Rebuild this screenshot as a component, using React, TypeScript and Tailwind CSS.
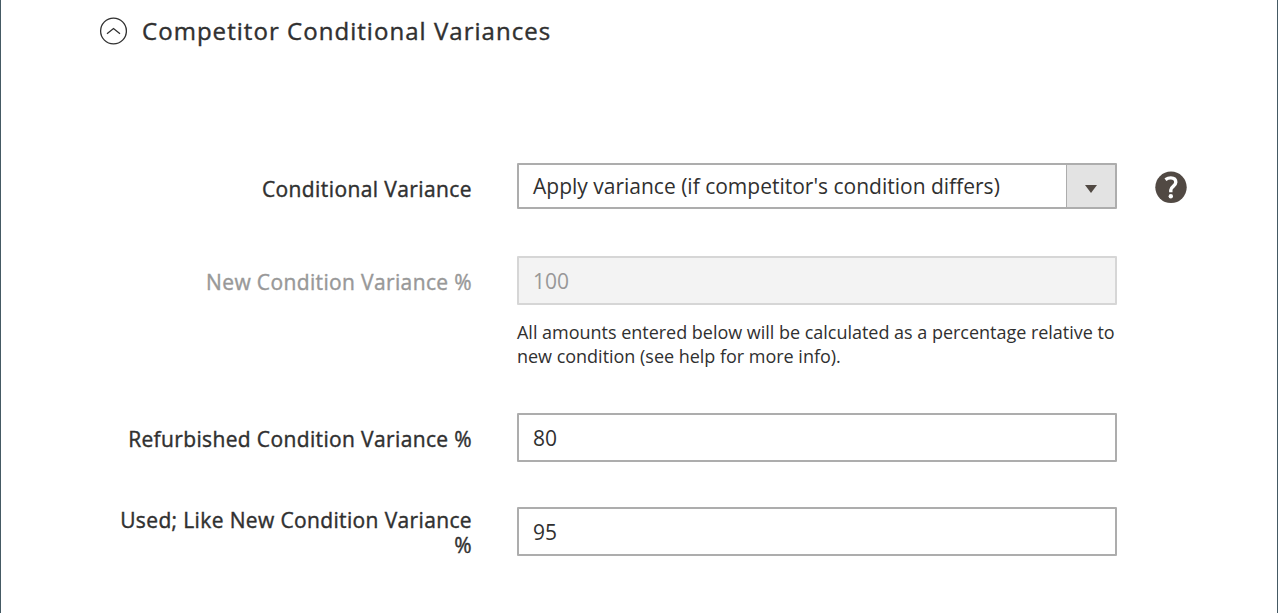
import type { ReactNode } from "react";

function Row({ label, labelClass, className, children }: { label: string; labelClass: string; className: string; children: ReactNode }) {
  return (
    <div className={`flex items-start ${className}`}>
      <label className={`w-[373px] shrink-0 text-right text-[21px] leading-[25px] font-medium tracking-[0.36px] [-webkit-text-stroke:0.4px] ${labelClass}`}>{label}</label>
      <div className="ml-[45px] w-[600px] shrink-0">{children}</div>
    </div>
  );
}

export default function App() {
  return (
    <main className="h-[613px] w-[1278px] overflow-hidden border-x border-[#455a64] bg-white pl-[99px] font-['Open_Sans',sans-serif] text-[#303030]">
      <header className="-ml-px flex h-[61px] items-center gap-[15px] pt-px">
        <svg width="28" height="28" viewBox="0 0 28 28" fill="none" stroke="#303030" strokeWidth="1.3">
          <circle cx="14.5" cy="14" r="12.9" />
          <path d="M8 16.8L14.5 11.5L21 16.8" />
        </svg>
        <h1 className="text-[24px] font-medium tracking-[1.04px] [-webkit-text-stroke:0.4px]">Competitor Conditional Variances</h1>
      </header>
      <div className="-ml-[1px] pt-[102px]">
        <div className="flex h-[93px] items-start">
          <label className="w-[373px] shrink-0 pt-[14px] text-right text-[21px] leading-[25px] font-medium tracking-[0.4px] [-webkit-text-stroke:0.4px]">Conditional Variance</label>
          <button className="ml-[45px] flex h-[46px] w-[600px] shrink-0 rounded-[1px] border-2 border-[#adadad] text-left text-[21px]">
            <span className="flex h-full grow items-center pt-[2px] pl-[14px]">Apply variance (if competitor's condition differs)</span>
            <span className="flex h-full w-[49px] items-center justify-center border-l border-[#adadad] bg-[#e3e3e3] pt-[6px]">
              <svg width="12" height="8" viewBox="0 0 12 8"><path d="M0 0h12L6 8z" fill="#514943" /></svg>
            </span>
          </button>
          <svg className="mt-2 ml-[38px]" width="32" height="32" viewBox="0 0 32 32">
            <circle cx="16" cy="16.3" r="15.7" fill="#514943" />
            <path d="M10.4 8.6Q13 6.9 15.8 6.9C19 6.9 20.8 8.7 20.8 11.3C20.8 15.1 15.8 15.5 15.8 19V21.2" fill="none" stroke="white" strokeWidth="3.4" />
            <circle cx="15.8" cy="25.2" r="2.2" fill="white" />
          </svg>
        </div>
        <Row label="New Condition Variance %" className="h-[157px]" labelClass="pt-[14px] text-[#989898]">
          <input readOnly value="100" className="block h-[49px] w-full rounded-[1px] border-2 border-[#d6d6d6] bg-[#f3f3f3] px-[14px] text-[21px] text-[#989898]" />
          <p className="mt-[15px] text-[18px] leading-[24px] tracking-[-0.02px]">All amounts entered below will be calculated as a percentage relative to new condition (see help for more info).</p>
        </Row>
        <Row label="Refurbished Condition Variance %" className="h-[94px]" labelClass="pt-[14px]">
          <input readOnly value="80" className="block h-[49px] w-full rounded-[1px] border-2 border-[#adadad] px-[14px] text-[21px]" />
        </Row>
        <Row label="Used; Like New Condition Variance %" className="h-[80px]" labelClass="pt-[1px]">
          <input readOnly value="95" className="block h-[49px] w-full rounded-[1px] border-2 border-[#adadad] px-[14px] text-[21px]" />
        </Row>
      </div>
    </main>
  );
}
